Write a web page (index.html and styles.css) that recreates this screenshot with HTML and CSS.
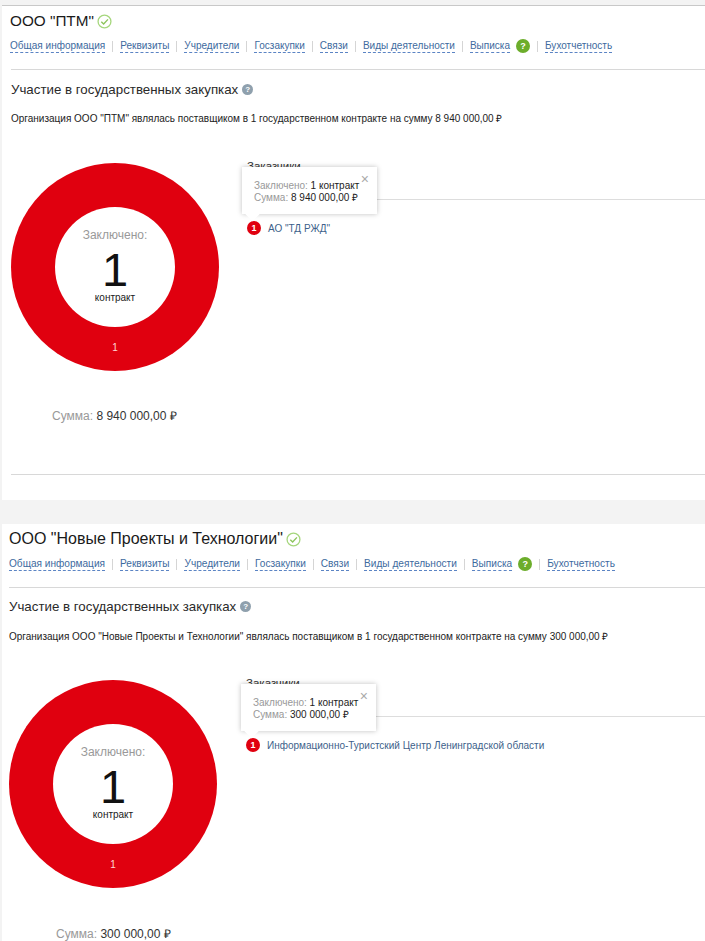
FILE: index.html
```html
<!DOCTYPE html>
<html>
	<head>
		<meta charset="utf-8" />
		<title>Госзакупки</title>
		<link rel="stylesheet" href="styles.css">
	</head>
	<body>
		<!--первая организация-->
		<div class="card card_first">
			<div class="title">
				<span>ООО "ПТМ"</span>
				<svg class="check" viewBox="0 0 14 14"><circle cx="7" cy="7" r="6" fill="none" stroke="#a5d67c" stroke-width="1.2"/><path d="M4 7.2l2.2 2.1L10.2 5" fill="none" stroke="#8cc45c" stroke-width="1.3"/></svg>
			</div>
			<ul class="nav">
				<li><a>Общая информация</a></li>
				<li><a>Реквизиты</a></li>
				<li><a>Учредители</a></li>
				<li><a>Госзакупки</a></li>
				<li><a>Связи</a></li>
				<li><a>Виды деятельности</a></li>
				<li><a>Выписка</a><i class="green_q">?</i></li>
				<li><a>Бухотчетность</a></li>
			</ul>
			<div class="line"></div>
			<h2 class="head">Участие в государственных закупках <i class="grey_q">?</i></h2>
			<p class="intro">Организация ООО "ПТМ" являлась поставщиком в 1 государственном контракте на сумму 8 940 000,00 ₽</p>
			<div class="chart">
				<div class="left">
					<div class="donut">
						<div class="hole">
							<span class="hole_top">Заключено:</span>
							<span class="hole_num">1</span>
							<span class="hole_bottom">контракт</span>
						</div>
						<span class="slice">1</span>
					</div>
				</div>
				<div class="right">
					<div class="right_head">Заказчики</div>
					<div class="right_row"><b class="badge">1</b><a>АО "ТД РЖД"</a></div>
					<div class="tip">
						<span class="tip_close">×</span>
						<div><em>Заключено:</em> 1 контракт</div>
						<div><em>Сумма:</em> 8 940 000,00 ₽</div>
					</div>
				</div>
			</div>
			<div class="sum"><em>Сумма:</em> 8 940 000,00 ₽</div>
			<div class="line line_end"></div>
		</div>
		<!--вторая организация-->
		<div class="card card_second">
			<div class="title">
				<span>ООО "Новые Проекты и Технологии"</span>
				<svg class="check" viewBox="0 0 14 14"><circle cx="7" cy="7" r="6" fill="none" stroke="#a5d67c" stroke-width="1.2"/><path d="M4 7.2l2.2 2.1L10.2 5" fill="none" stroke="#8cc45c" stroke-width="1.3"/></svg>
			</div>
			<ul class="nav">
				<li><a>Общая информация</a></li>
				<li><a>Реквизиты</a></li>
				<li><a>Учредители</a></li>
				<li><a>Госзакупки</a></li>
				<li><a>Связи</a></li>
				<li><a>Виды деятельности</a></li>
				<li><a>Выписка</a><i class="green_q">?</i></li>
				<li><a>Бухотчетность</a></li>
			</ul>
			<div class="line"></div>
			<h2 class="head">Участие в государственных закупках <i class="grey_q">?</i></h2>
			<p class="intro">Организация ООО "Новые Проекты и Технологии" являлась поставщиком в 1 государственном контракте на сумму 300 000,00 ₽</p>
			<div class="chart">
				<div class="left">
					<div class="donut">
						<div class="hole">
							<span class="hole_top">Заключено:</span>
							<span class="hole_num">1</span>
							<span class="hole_bottom">контракт</span>
						</div>
						<span class="slice">1</span>
					</div>
				</div>
				<div class="right">
					<div class="right_head">Заказчики</div>
					<div class="right_row"><b class="badge">1</b><a>Информационно-Туристский Центр Ленинградской области</a></div>
					<div class="tip">
						<span class="tip_close">×</span>
						<div><em>Заключено:</em> 1 контракт</div>
						<div><em>Сумма:</em> 300 000,00 ₽</div>
					</div>
				</div>
			</div>
			<div class="sum"><em>Сумма:</em> 300 000,00 ₽</div>
		</div>
	</body>
</html>
```

FILE: styles.css
```css
*{margin: 0;padding: 0;box-sizing: border-box;}
ul,li{list-style: none;}
html,body{height: 941px;overflow: hidden;}
body{background: #f3f3f3;font-family: "Liberation Sans", Arial, sans-serif;color: #222;padding-top: 5px;}
em{font-style: normal;color: #999;}
/*карточка*/
.card{margin-left: 2px;background: #fff;overflow: hidden;}
.card_first{height: 495px;padding: 5px 0 0 9px;border-top: 1px solid #c8c8c8;}
.card_second{height: 417px;margin-top: 24px;padding: 5px 0 0 7px;}
/*заголовок*/
.title{display: flex;align-items: center;height: 20px;font-size: 16px;color: #1a1a1a;}
.card_first .title{margin-left: -1px;font-size: 15.3px;}
.check{width: 15px;height: 15px;margin-left: 3px;}
/*меню*/
.nav{display: flex;align-items: center;height: 16px;margin-top: 7px;font-size: 10.1px;}
.card_first .nav{margin-left: -1px;font-size: 10.03px;}
.nav li{display: flex;align-items: center;padding-right: 7px;margin-right: 7px;border-right: 1px solid #d5d5d5;height: 11px;}
.nav li:last-child{border-right: none;}
.nav a{color: #3d6a9e;border-bottom: 1px dashed #5b84c4;line-height: 13px;height: 14px;}
.green_q{width: 14px;height: 14px;margin-left: 6px;border-radius: 50%;background: #6cad2b;color: #fff;font-size: 9px;font-weight: bold;font-style: normal;text-align: center;line-height: 14px;}
.line{height: 1px;margin-top: 15px;background: #d8d8d8;}
.line_end{margin-top: 51px;}
/*блок закупок*/
.head{display: flex;align-items: center;gap: 4px;height: 16px;margin-top: 11px;font-size: 13.3px;font-weight: normal;color: #2a2a2a;}
.card_second .head{margin-top: 10px;}
.grey_q{width: 11px;height: 11px;border-radius: 50%;background: #8fa0ad;color: #fff;font-size: 8px;font-weight: bold;font-style: normal;text-align: center;line-height: 11px;}
.intro{height: 12px;margin-top: 16px;font-size: 10px;line-height: 12px;color: #222;white-space: nowrap;}
.card_second .intro{margin-top: 17px;}
.chart{display: flex;margin-top: 38px;height: 208px;}
.card_second .chart{margin-top: 37px;}
.left{width: 236px;}
.card_second .left{width: 237px;}
.donut{position: relative;width: 208px;height: 208px;border-radius: 50%;background: #e0000f;display: flex;align-items: center;justify-content: center;}
.hole{width: 120px;height: 120px;border-radius: 50%;background: #fff;display: flex;flex-direction: column;align-items: center;}
.hole_top{margin-top: 21px;font-size: 12px;color: #999;}
.hole_num{margin-top: 5px;font-size: 47px;line-height: 45px;color: #111;}
.hole_bottom{font-size: 10px;color: #222;}
.slice{position: absolute;left: 0;right: 0;bottom: 18px;text-align: center;font-size: 10px;color: #ffd5d5;}
/*заказчики*/
.right{position: relative;flex: 1;}
.right_head{height: 40px;margin-top: -3px;font-size: 11.5px;color: #333;border-bottom: 1px solid #ddd;}
.right_row{display: flex;align-items: center;gap: 7px;margin-top: 21px;font-size: 10px;color: #3d5f8a;}
.badge{display: flex;align-items: center;justify-content: center;width: 14px;height: 14px;border-radius: 50%;background: #e0000f;color: #fff;font-size: 9px;}
.tip{position: absolute;left: -5px;top: 4px;width: 135px;height: 47px;padding: 13px 12px 0;background: #fff;box-shadow: 0 0 5px rgba(0,0,0,.25);font-size: 10px;line-height: 12px;color: #222;}
.tip:after{content: "";position: absolute;left: 5px;bottom: -5px;width: 11px;height: 11px;background: #fff;transform: rotate(45deg);}
.tip_close{position: absolute;top: 6px;right: 8px;font-size: 14px;line-height: 12px;color: #aaa;}
.sum{margin: 38px 0 0 41px;font-size: 12px;line-height: 14px;color: #333;}
.card_second .sum{margin: 39px 0 0 47px;}
```
